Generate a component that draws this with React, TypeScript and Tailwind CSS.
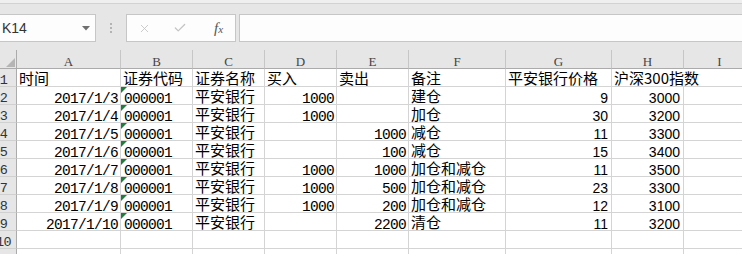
import { X, Check } from "lucide-react";

const mono = "font-['Liberation_Mono','Noto_Sans_CJK_SC',monospace] text-[14.5px] tracking-[-0.7px] leading-[11px] pt-[7px]";
const cjk = "font-['Noto_Sans_CJK_SC',sans-serif] text-[15px] leading-[17px]";
const sans = "font-['Liberation_Sans','Noto_Sans_CJK_SC',sans-serif] text-[14px] leading-[13px] pt-[5px]";

const rowGrid = "grid grid-cols-[26px_104px_72px_72px_72px_72px_97px_106px_72px_72px]";

const letters = ["A", "B", "C", "D", "E", "F", "G", "H", "I"];

const header = ["时间", "证券代码", "证券名称", "买入", "卖出", "备注", "平安银行价格", "沪深300指数", ""];

const data = [
  ["2017/1/3", "000001", "平安银行", "1000", "", "建仓", "9", "3000"],
  ["2017/1/4", "000001", "平安银行", "1000", "", "加仓", "30", "3200"],
  ["2017/1/5", "000001", "平安银行", "", "1000", "减仓", "11", "3300"],
  ["2017/1/6", "000001", "平安银行", "", "100", "减仓", "15", "3400"],
  ["2017/1/7", "000001", "平安银行", "1000", "1000", "加仓和减仓", "11", "3500"],
  ["2017/1/8", "000001", "平安银行", "1000", "500", "加仓和减仓", "23", "3300"],
  ["2017/1/9", "000001", "平安银行", "1000", "200", "加仓和减仓", "12", "3100"],
  ["2017/1/10", "000001", "平安银行", "", "2200", "清仓", "11", "3200"],
];

// text style of each column in the data rows
const colStyle = [
  `${mono} text-right pr-[2px]`,
  `${mono} pl-[3px]`,
  `${cjk} pl-[2px]`,
  `${mono} text-right pr-[2px]`,
  `${mono} text-right pr-[2px]`,
  `${cjk} pl-[2px]`,
  `${sans} text-right pr-[3px]`,
  `${sans} text-right pr-[3px]`,
];

const RowHead = ({ n }: { n: number }) => (
  <div className="h-[18px] bg-[#e6e6e6] border-b border-r border-b-[#d0d0d0] border-r-[#ababab] text-center text-[#333] font-['Liberation_Mono',monospace] text-[13.5px] tracking-[-0.5px] leading-[13px] pt-[5px] overflow-hidden">
    {n}
  </div>
);

const Toolbar = () => (
  <div className="h-[50px] bg-[#e6e6e6]">
    <div className="h-[3px] bg-[#efefef] border-b border-[#d2d2d2] box-content" />
    <div className="flex items-start pt-[10px]">
      {/* name box */}
      <div className="ml-[-5px] w-[101px] h-[28px] bg-[#fdfdfd] border border-[#c6c6c6] flex items-center justify-between pl-[6px] pr-[5px]">
        <span className="font-['Liberation_Sans',sans-serif] text-[14px] text-[#333]">K14</span>
        <svg width="8" height="5" viewBox="0 0 8 5">
          <path d="M0 0 L8 0 L4 4.5 Z" fill="#6f6f6f" />
        </svg>
      </div>
      <div className="w-[30px] h-[28px] flex flex-col items-center justify-center gap-[2px]">
        <div className="w-[2px] h-[2px] bg-[#b3b3b3]" />
        <div className="w-[2px] h-[2px] bg-[#b3b3b3]" />
        <div className="w-[2px] h-[2px] bg-[#b3b3b3]" />
      </div>
      <div className="w-[110px] h-[28px] bg-[#fdfdfd] border border-[#c6c6c6] flex items-center pl-[11px]">
        <X size={13} strokeWidth={1.6} color="#c4c4c4" />
        <Check size={14} strokeWidth={2.2} color="#c4c4c4" className="ml-[22px]" />
        <span className="ml-[27px] font-['Liberation_Serif',serif] italic text-[15px] text-[#555] leading-none">
          f<span className="text-[11px]">x</span>
        </span>
      </div>
      <div className="ml-[3px] flex-1 h-[28px] bg-[#fdfdfd] border-y border-l border-[#c6c6c6]" />
    </div>
  </div>
);

export default function App() {
  return (
    <div className="w-[742px] h-[254px] overflow-hidden bg-white">
      <Toolbar />
      <div className="ml-[-9px] w-[760px]">
        {/* column letters */}
        <div className={rowGrid}>
          <div className="h-[19px] bg-[#e6e6e6] border-b border-r border-[#ababab] flex items-end justify-end pr-[1px] pb-[1px]">
            <svg width="9" height="9" viewBox="0 0 9 9">
              <path d="M9 0 L9 9 L0 9 Z" fill="#b5b5b5" />
            </svg>
          </div>
          {letters.map((l) => (
            <div
              key={l}
              className="h-[19px] bg-[#e6e6e6] border-b border-r border-b-[#ababab] border-r-[#c6c6c6] text-center text-[#444] font-['Liberation_Serif',serif] text-[13px] leading-[12px] pt-[6px] overflow-hidden"
            >
              {l}
            </div>
          ))}
        </div>
        {/* row 1: titles */}
        <div className={rowGrid}>
          <RowHead n={1} />
          {header.map((t, i) => (
            <div
              key={i}
              className={`h-[18px] border-b border-[#d4d4d4] whitespace-nowrap text-black ${cjk} pl-[2px] ${i === 7 ? "" : "border-r"}`}
            >
              {t}
            </div>
          ))}
        </div>
        {data.map((r, ri) => (
          <div key={ri} className={rowGrid}>
            <RowHead n={ri + 2} />
            {r.map((t, i) => (
              <div
                key={i}
                className={`relative h-[18px] border-b border-r border-[#d4d4d4] whitespace-nowrap text-black ${colStyle[i]}`}
              >
                {i === 1 && (
                  <svg className="absolute left-0 top-0" width="6" height="6" viewBox="0 0 6 6">
                    <path d="M0 0 L6 0 L0 6 Z" fill="#1f7d3c" />
                  </svg>
                )}
                {t}
              </div>
            ))}
            <div className="h-[18px] border-b border-r border-[#d4d4d4]" />
          </div>
        ))}
        {[10, 11].map((n) => (
          <div key={n} className={rowGrid}>
            <RowHead n={n} />
            {letters.map((l) => (
              <div key={l} className="h-[18px] border-b border-r border-[#d4d4d4]" />
            ))}
          </div>
        ))}
      </div>
    </div>
  );
}
